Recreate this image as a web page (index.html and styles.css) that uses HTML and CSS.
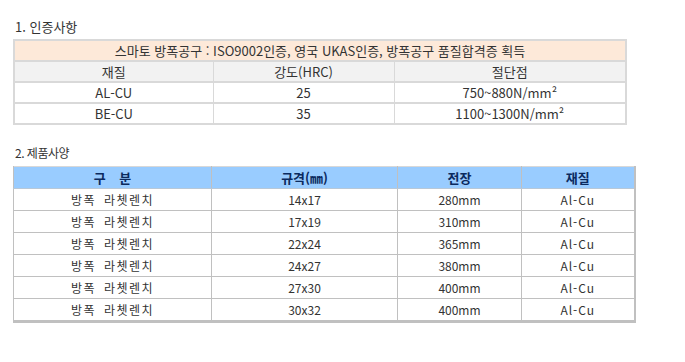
FILE: index.html
```html
<!DOCTYPE html>
<html lang="ko">
<head>
<meta charset="utf-8">
<link rel="stylesheet" href="styles.css">
</head>
<body>
<div class="page">
  <h2 class="title t1">1. 인증사항</h2>
  <table class="cert">
    <colgroup><col class="c1"><col class="c2"><col class="c3"></colgroup>
    <tr class="head"><td colspan="3">스마토 방폭공구 : ISO9002인증, 영국 UKAS인증, 방폭공구 품질합격증 획득</td></tr>
    <tr class="sub"><td>재질</td><td>강도(HRC)</td><td>절단점</td></tr>
    <tr><td>AL-CU</td><td>25</td><td>750~880N/mm²</td></tr>
    <tr><td>BE-CU</td><td>35</td><td>1100~1300N/mm²</td></tr>
  </table>

  <h2 class="title t2">2. 제품사양</h2>
  <table class="spec">
    <colgroup><col class="d1"><col class="d2"><col class="d3"><col class="d4"></colgroup>
    <tr class="head"><th>구 분</th><th>규격(㎜)</th><th>전장</th><th>재질</th></tr>
    <tr><td>방폭 라쳇렌치</td><td>14x17</td><td>280mm</td><td>Al-Cu</td></tr>
    <tr><td>방폭 라쳇렌치</td><td>17x19</td><td>310mm</td><td>Al-Cu</td></tr>
    <tr><td>방폭 라쳇렌치</td><td>22x24</td><td>365mm</td><td>Al-Cu</td></tr>
    <tr><td>방폭 라쳇렌치</td><td>24x27</td><td>380mm</td><td>Al-Cu</td></tr>
    <tr><td>방폭 라쳇렌치</td><td>27x30</td><td>400mm</td><td>Al-Cu</td></tr>
    <tr><td>방폭 라쳇렌치</td><td>30x32</td><td>400mm</td><td>Al-Cu</td></tr>
  </table>
</div>
</body>
</html>
```

FILE: styles.css
```css
html, body {
  margin: 0;
  padding: 0;
  background: #fff;
}
.page {
  padding: 18px 0 0 13px;
  font-family: "Noto Sans CJK KR", "Noto Sans", sans-serif;
  color: #333;
}
.title {
  margin: 0;
  font-weight: normal;
  font-size: 13px;
  line-height: 18px;
  color: #333;
  padding-left: 2px;
}
.t1 { margin-bottom: 3px; }
.t2 { margin-top: 19px; margin-bottom: 4px; font-size: 12px; letter-spacing: -0.5px; }

table {
  border-collapse: collapse;
  table-layout: fixed;
}
.cert {
  width: 612px;
  border: 2px solid #d9d9d9;
}
.cert td {
  border: 2px solid #d9d9d9;
  border-left-width: 1px;
  border-right-width: 1px;
  height: 19px;
  padding: 0;
  text-align: center;
  font-size: 13px;
  line-height: 19px;
  color: #333;
}
.cert tr:first-child td { border-top-width: 2px; }
.cert .c1 { width: 199px; }
.cert .c2 { width: 181px; }
.cert .c3 { width: 232px; }
.cert .head td { background: #fde9d9; border-left: 2px solid #d9d9d9; border-right: 2px solid #d9d9d9; }
.cert .sub td { background: #f2f2f2; }
.cert td:first-child { border-left-width: 2px; }
.cert td:last-child { border-right-width: 2px; }

.spec {
  width: 621px;
  border-top: 1px solid #d8d8d8;
  border-left: 1px solid #c0c0c0;
  border-right: 2px solid #c0c0c0;
  border-bottom: 3px solid #c0c0c0;
}
.spec .d1 { width: 198px; }
.spec .d2 { width: 186px; }
.spec .d3 { width: 124px; }
.spec .d4 { width: 113px; }
.spec th, .spec td {
  border: 1px solid #c0c0c0;
  padding: 0;
  height: 21px;
  text-align: center;
  line-height: 21px;
}
.spec th {
  background: #99ccff;
  color: #0b2a5e;
  font-size: 13px;
  font-weight: bold;
  border-top: none;
  border-bottom: 1px solid #b8c8d8;
}
.spec th:first-child { word-spacing: 10px; }
.spec td {
  font-size: 12px;
  color: #333;
  background: #fff;
}
.spec td:first-child { letter-spacing: 1.5px; word-spacing: 3px; }
.spec td:last-child { letter-spacing: 1px; }
```
